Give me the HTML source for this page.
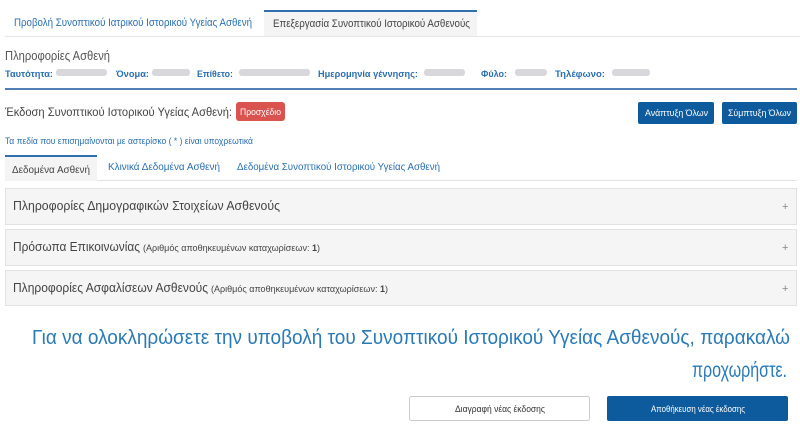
<!DOCTYPE html>
<html><head><meta charset="utf-8"><style>
html,body{margin:0;padding:0;background:#fff;width:800px;height:427px;overflow:hidden}
svg{display:block;font-family:"Liberation Sans",sans-serif}
</style></head><body>
<svg width="800" height="427" viewBox="0 0 800 427" xmlns="http://www.w3.org/2000/svg">
<g>
<text x="14" y="26" font-size="11" fill="#2a6fb0" textLength="238" lengthAdjust="spacingAndGlyphs">Προβολή Συνοπτικού Ιατρικού Ιστορικού Υγείας Ασθενή</text>
<rect x="264" y="10" width="213" height="27" fill="#f4f4f4"/>
<rect x="264" y="10" width="213" height="2" fill="#2f6fad"/>
<text x="273" y="27" font-size="11" fill="#444" textLength="197" lengthAdjust="spacingAndGlyphs">Επεξεργασία Συνοπτικού Ιστορικού Ασθενούς</text>
<rect x="5" y="36" width="795" height="1" fill="#e6e6e6"/>

<text x="5" y="60" font-size="13" fill="#555" textLength="105" lengthAdjust="spacingAndGlyphs">Πληροφορίες Ασθενή</text>
<g font-size="9" font-weight="bold" fill="#2a6fb0">
<text x="5" y="77" textLength="48" lengthAdjust="spacingAndGlyphs">Ταυτότητα:</text>
<text x="116" y="77" textLength="33" lengthAdjust="spacingAndGlyphs">Όνομα:</text>
<text x="197" y="77" textLength="36" lengthAdjust="spacingAndGlyphs">Επίθετο:</text>
<text x="318" y="77" textLength="100" lengthAdjust="spacingAndGlyphs">Ημερομηνία γέννησης:</text>
<text x="481" y="77" textLength="26" lengthAdjust="spacingAndGlyphs">Φύλο:</text>
<text x="555" y="77" textLength="50" lengthAdjust="spacingAndGlyphs">Τηλέφωνο:</text>
</g>
<g fill="#d8d8dc">
<rect x="56" y="69" width="51" height="7" rx="3"/>
<rect x="152" y="69" width="38" height="7" rx="3"/>
<rect x="239" y="69" width="71" height="7" rx="3"/>
<rect x="424" y="69" width="41" height="7" rx="3"/>
<rect x="515" y="69" width="32" height="7" rx="3"/>
<rect x="612" y="69" width="38" height="7" rx="3"/>
</g>
<rect x="5" y="88" width="792" height="2" fill="#4f7fb3"/>

<text x="5" y="116" font-size="12" fill="#444" textLength="227" lengthAdjust="spacingAndGlyphs">Έκδοση Συνοπτικού Ιστορικού Υγείας Ασθενή:</text>
<rect x="236" y="102" width="49" height="19" rx="3" fill="#d9534f"/>
<text x="240" y="115" font-size="9" fill="#fff" textLength="41" lengthAdjust="spacingAndGlyphs">Προσχέδιο</text>
<rect x="638" y="102" width="76" height="22" rx="2" fill="#0d5a9c"/>
<text x="645" y="116" font-size="9" fill="#fff" textLength="63" lengthAdjust="spacingAndGlyphs">Ανάπτυξη Όλων</text>
<rect x="722" y="102" width="75" height="22" rx="2" fill="#0d5a9c"/>
<text x="728" y="116" font-size="9" fill="#fff" textLength="63" lengthAdjust="spacingAndGlyphs">Σύμπτυξη Όλων</text>

<text x="5" y="144" font-size="9" fill="#2a6fb0" textLength="248" lengthAdjust="spacingAndGlyphs">Τα πεδία που επισημαίνονται με αστερίσκο ( * ) είναι υποχρεωτικά</text>

<rect x="5" y="155" width="92" height="26" fill="#f4f4f4"/>
<rect x="5" y="155" width="92" height="2" fill="#2f6fad"/>
<text x="12" y="173" font-size="10" fill="#444" textLength="78" lengthAdjust="spacingAndGlyphs">Δεδομένα Ασθενή</text>
<text x="108" y="170" font-size="10" fill="#2a6fb0" textLength="112" lengthAdjust="spacingAndGlyphs">Κλινικά Δεδομένα Ασθενή</text>
<text x="237" y="170" font-size="10" fill="#2a6fb0" textLength="203" lengthAdjust="spacingAndGlyphs">Δεδομένα Συνοπτικού Ιστορικού Υγείας Ασθενή</text>
<rect x="97" y="180" width="700" height="1" fill="#e2e2e2"/>

<g fill="#f5f5f5" stroke="#e2e2e2">
<rect x="5.5" y="188.5" width="791" height="36"/>
<rect x="5.5" y="229.5" width="791" height="36"/>
<rect x="5.5" y="270.5" width="791" height="35"/>
</g>
<text x="13" y="210" font-size="13" fill="#444" textLength="267" lengthAdjust="spacingAndGlyphs">Πληροφορίες Δημογραφικών Στοιχείων Ασθενούς</text>
<text x="13" y="251" font-size="13" fill="#444" textLength="127" lengthAdjust="spacingAndGlyphs">Πρόσωπα Επικοινωνίας</text>
<text x="143" y="251" font-size="9" fill="#444" textLength="177" lengthAdjust="spacingAndGlyphs">(Αριθμός αποθηκευμένων καταχωρίσεων: <tspan font-weight="bold">1</tspan>)</text>
<text x="13" y="292" font-size="13" fill="#444" textLength="195" lengthAdjust="spacingAndGlyphs">Πληροφορίες Ασφαλίσεων Ασθενούς</text>
<text x="211" y="292" font-size="9" fill="#444" textLength="177" lengthAdjust="spacingAndGlyphs">(Αριθμός αποθηκευμένων καταχωρίσεων: <tspan font-weight="bold">1</tspan>)</text>
<g font-size="11" fill="#888">
<text x="782" y="210">+</text>
<text x="782" y="251">+</text>
<text x="782" y="292">+</text>
</g>

<text x="32" y="344" font-size="20" fill="#2a7ab8" textLength="758" lengthAdjust="spacingAndGlyphs">Για να ολοκληρώσετε την υποβολή του Συνοπτικού Ιστορικού Υγείας Ασθενούς, παρακαλώ</text>
<text x="692" y="377" font-size="21" fill="#2a7ab8" textLength="95" lengthAdjust="spacingAndGlyphs">προχωρήστε.</text>

<rect x="409.5" y="396.5" width="180" height="24" rx="2" fill="#fff" stroke="#ccc"/>
<text x="455" y="412" font-size="9" fill="#333" textLength="90" lengthAdjust="spacingAndGlyphs">Διαγραφή νέας έκδοσης</text>
<rect x="607" y="396" width="181" height="25" rx="2" fill="#0d5a9c"/>
<text x="651" y="412" font-size="9" fill="#fff" textLength="94" lengthAdjust="spacingAndGlyphs">Αποθήκευση νέας έκδοσης</text>
</g>
</svg>
</body></html>
